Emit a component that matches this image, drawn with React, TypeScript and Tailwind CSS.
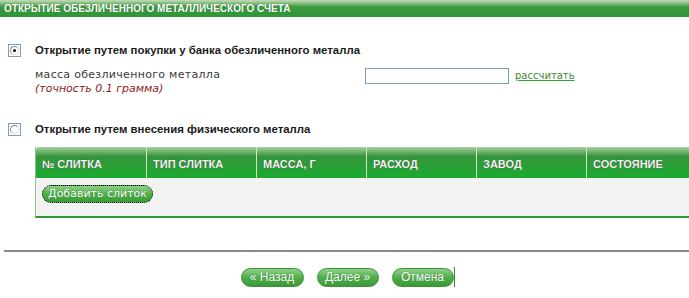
const columns = ["№ СЛИТКА", "ТИП СЛИТКА", "МАССА, Г", "РАСХОД", "ЗАВОД", "СОСТОЯНИЕ"];

function Radio({ checked }: { checked?: boolean }) {
  return (
    <span className="flex h-[13px] w-[13px] items-center justify-center border border-[#7f9db9] bg-white">
      <span className="flex h-[9px] w-[9px] items-center justify-center rounded-full border border-t-[#8a8a8a] border-l-[#8a8a8a] border-r-[#d8d8d8] border-b-[#d8d8d8]">
        {checked && <span className="h-[3px] w-[3px] rounded-full bg-black" />}
      </span>
    </span>
  );
}

function PillButton({ label, width }: { label: string; width: string }) {
  return (
    <button
      className={`flex h-[19px] ${width} items-center justify-center rounded-full border border-[#3d8f3a] bg-gradient-to-b from-[#8fd08a] via-[#4fb04a] to-[#3a9a36] font-['Liberation_Sans',sans-serif] text-[12px] text-white [text-shadow:0_0_1px_#2a6a2a]`}
    >
      {label}
    </button>
  );
}

export default function App() {
  return (
    <div className="h-[298px] w-[689px] overflow-hidden bg-white font-['DejaVu_Sans',sans-serif]">
      <div className="flex h-[17px] items-center bg-gradient-to-b from-[#c3dcb8] via-[#3a9a3f] via-40% to-[#2e9736] pl-1 font-['Liberation_Sans',sans-serif] text-[10px] font-bold text-white [text-shadow:0_0_1px_#1e5a1e]">
        ОТКРЫТИЕ ОБЕЗЛИЧЕННОГО МЕТАЛЛИЧЕСКОГО СЧЕТА
      </div>

      <div className="mt-[25px] flex items-center pl-2">
        <Radio checked />
        <span className="ml-[14px] font-['Liberation_Sans',sans-serif] text-[11.4px] font-bold text-[#1a1a1a]">
          Открытие путем покупки у банка обезличенного металла
        </span>
      </div>

      <div className="mt-[9px] flex pl-[35px]">
        <div className="w-[330px] text-[11px] leading-[14px] tracking-[0.3px]">
          <div className="text-[#3a3a3a]">масса обезличенного металла</div>
          <div className="italic tracking-normal text-[#8b1c1c]">(точность 0.1 грамма)</div>
        </div>
        <input className="h-[16px] w-[144px] border border-[#7f9db9] bg-white" />
        <a className="ml-[6px] text-[10px] leading-[16px] text-[#3d8a2c] underline decoration-[#2fa830]">
          рассчитать
        </a>
      </div>

      <div className="mt-[25px] flex items-center pl-2">
        <Radio />
        <span className="ml-[14px] font-['Liberation_Sans',sans-serif] text-[11.4px] font-bold text-[#1a1a1a]">
          Открытие путем внесения физического металла
        </span>
      </div>

      <div className="ml-[35px] mt-[9px] w-[720px] border-b-2 border-l border-b-[#2b9a2f] border-l-[#8cc48a]">
        <div className="flex h-[31px] rounded-tl-[3px] bg-gradient-to-b from-[#a7d0a0] via-[#33963a] via-30% to-[#17ab30]">
          {columns.map((c, i) => (
            <div
              key={c}
              className={`flex w-[110px] items-center px-[6px] pt-[3px] font-['Liberation_Sans',sans-serif] text-[11px] font-bold text-[#f4f4f4] [text-shadow:0_0_1px_#333] ${
                i > 0 ? "border-l border-l-[#cfe6c8]" : ""
              }`}
            >
              {c}
            </div>
          ))}
        </div>
        <div className="h-[38px] bg-[#f2f2f2] pl-[6px] pt-[7px]">
          <button className="flex h-[18px] w-[111px] items-center justify-center rounded-full border border-dotted border-black bg-gradient-to-b from-[#8fd08a] via-[#4fb04a] to-[#3a9a36] text-[11px] text-white [text-shadow:0_0_1px_#2a6a2a]">
            Добавить слиток
          </button>
        </div>
      </div>

      <div className="ml-1 mt-[32px] h-[2px] bg-[#8a8a8a]" />

      <div className="mt-[15px] flex items-center justify-center gap-[13px] pl-[6px]">
        <PillButton label="« Назад" width="w-[63px]" />
        <PillButton label="Далее »" width="w-[62px]" />
        <div className="flex items-center">
          <PillButton label="Отмена" width="w-[62px]" />
          <span className="h-[20px] w-px bg-[#2b9a2f]" />
        </div>
      </div>
    </div>
  );
}
